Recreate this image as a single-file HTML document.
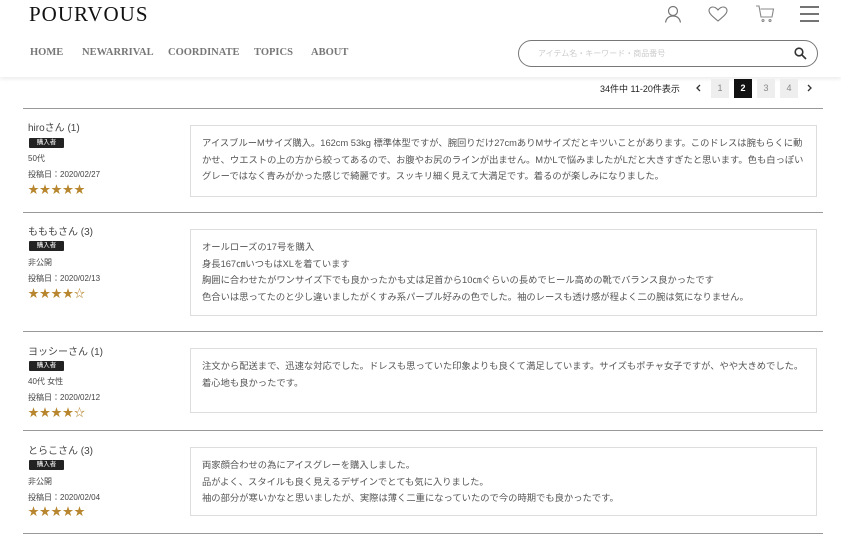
<!DOCTYPE html>
<html><head><meta charset="utf-8"><style>
*{margin:0;padding:0;box-sizing:border-box}
body{width:841px;height:539px;overflow:hidden;background:#fff;position:relative;font-family:"Liberation Sans","Noto Sans CJK JP",sans-serif;color:#333}
.a{position:absolute}
.logo{left:29px;top:2px;font-family:"Liberation Serif",serif;font-size:21px;letter-spacing:1px;color:#111;font-weight:normal}
.nav{top:47px;font-family:"Liberation Serif",serif;font-size:10.5px;color:#777;font-weight:bold}
.hdr{left:0;top:0;width:841px;height:77px;box-shadow:0 2px 4px rgba(0,0,0,0.08)}
.search{left:518px;top:40px;width:300px;height:27px;border:1px solid #777;border-radius:14px}
.search span{position:absolute;left:19px;top:7px;font-size:8px;color:#ccc}
.line{left:23px;width:800px;height:1px;background:#999}
.nm{left:28px;font-size:10px;color:#444}
.bd{left:29px;width:35px;height:10px;background:#222;color:#fff;font-size:6.5px;text-align:center;line-height:10px;border-radius:1px}
.sm{left:28px;font-size:8px;color:#444}
.st{left:28px;font-size:11px;color:#b8862e;letter-spacing:0.5px}
.box{left:190px;width:627px;border:1px solid #ddd;padding:10px 11px;font-size:9.3px;line-height:16.6px;color:#555}
.pg{top:79px;width:18px;height:19px;font-size:9px;text-align:center;line-height:19px;background:#eee;color:#888}
</style></head><body>
<div class="a hdr"></div>
<div class="a logo">POURVOUS</div>
<div class="a nav" style="left:30px">HOME</div>
<div class="a nav" style="left:82px">NEWARRIVAL</div>
<div class="a nav" style="left:168px">COORDINATE</div>
<div class="a nav" style="left:254px">TOPICS</div>
<div class="a nav" style="left:311px">ABOUT</div>
<svg class="a" style="left:664px;top:5px" width="18" height="18" viewBox="0 0 18 18" fill="none" stroke="#777" stroke-width="1.2"><circle cx="9" cy="6" r="4.5"/><path d="M1.5 17.5C2.5 12.5 5.5 11 9 11s6.5 1.5 7.5 6.5"/></svg>
<svg class="a" style="left:708px;top:6px" width="20" height="16" viewBox="0 0 20 16" fill="none" stroke="#777" stroke-width="1.1"><path d="M10 15C4 10 1 7.5 1 4.5 1 2.5 2.7 1 4.8 1 7 1 8.8 2.5 10 4c1.2-1.5 3-3 5.2-3C17.3 1 19 2.5 19 4.5 19 7.5 16 10 10 15z"/></svg>
<svg class="a" style="left:755px;top:5px" width="20" height="18" viewBox="0 0 20 18" fill="none" stroke="#888" stroke-width="1.1"><path d="M1 1h3l2 11h11l1.5-8H5.5"/><circle cx="8" cy="15.5" r="1"/><circle cx="15" cy="15.5" r="1"/></svg>
<svg class="a" style="left:800px;top:6px" width="19" height="16" viewBox="0 0 19 16" stroke="#222" stroke-width="1.3"><path d="M0 1h19M0 8h19M0 15h19"/></svg>
<div class="a search"><span>アイテム名・キーワード・商品番号</span>
<svg style="position:absolute;right:10px;top:6px" width="13" height="13" viewBox="0 0 13 13" fill="none" stroke="#333" stroke-width="1.6"><circle cx="5" cy="5" r="3.8"/><path d="M8 8l4 4"/></svg></div>
<div class="a" style="left:600px;top:82px;font-size:9px;color:#222">34件中 11-20件表示</div>
<svg class="a" style="left:695px;top:84px" width="6" height="8" viewBox="0 0 6 8" fill="none" stroke="#333" stroke-width="1.3"><path d="M5 1L2 4l3 3"/></svg>
<div class="a pg" style="left:711px">1</div>
<div class="a pg" style="left:734px;background:#111;color:#fff;font-weight:bold">2</div>
<div class="a pg" style="left:757px">3</div>
<div class="a pg" style="left:780px">4</div>
<svg class="a" style="left:807px;top:84px" width="6" height="8" viewBox="0 0 6 8" fill="none" stroke="#333" stroke-width="1.3"><path d="M1 1l3 3-3 3"/></svg>

<div class="a line" style="top:108px"></div>
<div class="a nm" style="top:119px">hiroさん (1)</div>
<div class="a bd" style="top:138px">購入者</div>
<div class="a sm" style="top:153px">50代</div>
<div class="a sm" style="top:169px">投稿日：2020/02/27</div>
<div class="a st" style="top:181px">★★★★★</div>
<div class="a box" style="top:125px;height:72px;padding-top:9px">アイスブルーMサイズ購入。162cm 53kg 標準体型ですが、腕回りだけ27cmありMサイズだとキツいことがあります。このドレスは腕もらくに動かせ、ウエストの上の方から絞ってあるので、お腹やお尻のラインが出ません。MかLで悩みましたがLだと大きすぎたと思います。色も白っぽいグレーではなく青みがかった感じで綺麗です。スッキリ細く見えて大満足です。着るのが楽しみになりました。</div>

<div class="a line" style="top:212px"></div>
<div class="a nm" style="top:223px">もももさん (3)</div>
<div class="a bd" style="top:241px">購入者</div>
<div class="a sm" style="top:257px">非公開</div>
<div class="a sm" style="top:273px">投稿日：2020/02/13</div>
<div class="a st" style="top:285px">★★★★☆</div>
<div class="a box" style="top:229px;height:87px;padding-top:9px">オールローズの17号を購入<br>身長167㎝いつもはXLを着ています<br>胸囲に合わせたがワンサイズ下でも良かったかも丈は足首から10㎝ぐらいの長めでヒール高めの靴でバランス良かったです<br>色合いは思ってたのと少し違いましたがくすみ系パープル好みの色でした。袖のレースも透け感が程よく二の腕は気になりません。</div>

<div class="a line" style="top:331px"></div>
<div class="a nm" style="top:343px">ヨッシーさん (1)</div>
<div class="a bd" style="top:361px">購入者</div>
<div class="a sm" style="top:376px">40代 女性</div>
<div class="a sm" style="top:392px">投稿日：2020/02/12</div>
<div class="a st" style="top:404px">★★★★☆</div>
<div class="a box" style="top:348px;height:65px;padding-top:9px">注文から配送まで、迅速な対応でした。ドレスも思っていた印象よりも良くて満足しています。サイズもポチャ女子ですが、やや大きめでした。着心地も良かったです。</div>

<div class="a line" style="top:430px"></div>
<div class="a nm" style="top:442px">とらこさん (3)</div>
<div class="a bd" style="top:460px">購入者</div>
<div class="a sm" style="top:476px">非公開</div>
<div class="a sm" style="top:492px">投稿日：2020/02/04</div>
<div class="a st" style="top:503px">★★★★★</div>
<div class="a box" style="top:447px;height:69px;padding-top:9px">両家顔合わせの為にアイスグレーを購入しました。<br>品がよく、スタイルも良く見えるデザインでとても気に入りました。<br>袖の部分が寒いかなと思いましたが、実際は薄く二重になっていたので今の時期でも良かったです。</div>
<div class="a line" style="top:533px"></div>
</body></html>
